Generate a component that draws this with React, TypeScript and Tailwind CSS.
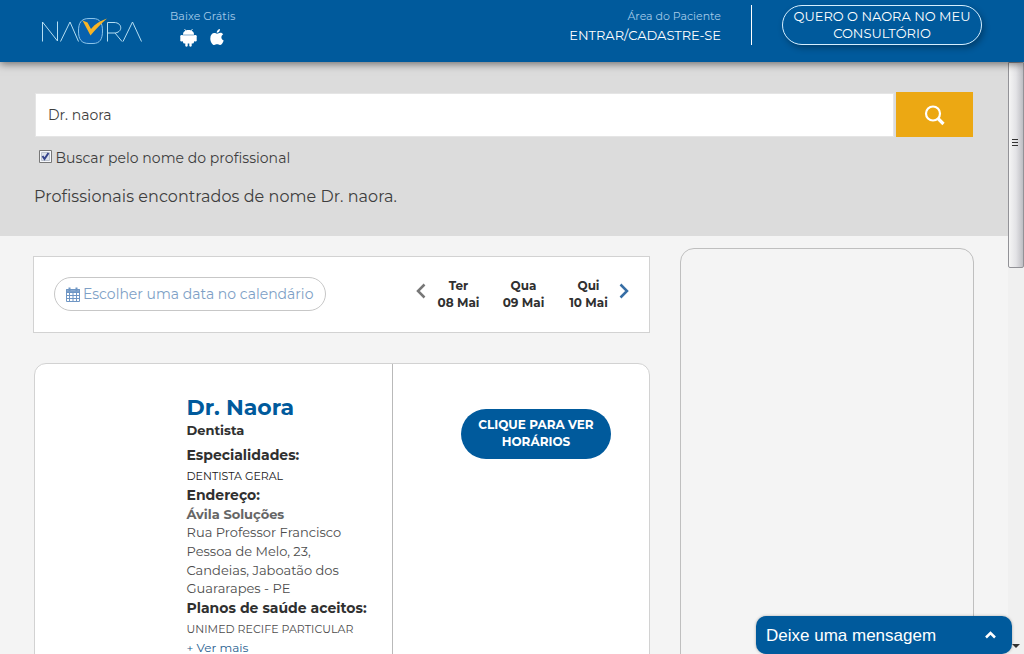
import React from "react";

const days = [
  { name: "Ter", date: "08 Mai" },
  { name: "Qua", date: "09 Mai" },
  { name: "Qui", date: "10 Mai" },
];

function Logo() {
  return (
    <svg width="104" height="30" viewBox="0 0 104 30" fill="none" stroke="#b5def2" strokeWidth="1">
      <path d="M2.500 24.500V5L17.500 24V4.500M20.500 24.500L30 5L38.500 24.500" />
      <path d="M49 1.500H53C60 1.500 62.500 6 62.500 14C62.500 22 60 26.500 53 26.500H49C41 26.500 38.500 22 38.500 14C38.500 6 41 1.500 49 1.500Z" fill="#0861ae" stroke="#8cc4e8" />
      <path d="M67.500 24.500V5.500H74C83 5.500 83 16 74 16H67.500M75 16L82 24.500M83 24.500L92.500 5L101.500 24.500" />
      <path d="M42.500 3.500L47.500 5.500L51 12C55 7 60 4 67 1.500C61 7 55.500 12 50.500 18.500Z" fill="#f8b426" stroke="none" />
    </svg>
  );
}

function AndroidIcon() {
  return (
    <svg width="17" height="20" viewBox="0 0 17 20" fill="#fff">
      <path d="M4.500 1L6 3M12.500 1L11 3" stroke="#fff" strokeWidth=".8" />
      <path d="M3 6.700C3 3.500 5.500 2 8.500 2S14 3.500 14 6.700Z" />
      <path d="M3 7.200H14V14Q14 15.500 12.500 15.500H11.700V18Q10.500 19.500 9.300 18V15.500H7.700V18Q6.500 19.500 5.300 18V15.500H4.500Q3 15.500 3 14Z" />
      <rect x=".3" y="7" width="3" height="6.500" rx="1.300" />
      <rect x="13.700" y="7" width="3" height="6.500" rx="1.300" />
    </svg>
  );
}

function AppleIcon() {
  return (
    <svg width="14" height="18" viewBox="0 0 14 18" fill="#fff">
      <path d="M10 1C10 3.500 8.500 4.800 6.700 4.700C6.700 2.600 8.200 1.200 10 1Z" />
      <path d="M7 5.700C8.200 5.700 9 4.800 10.400 4.800C11.600 4.800 12.600 5.400 13.200 6.300C10.500 8 11 11.500 13.700 12.500C12.800 15 11.500 17 10 17C8.800 17 8.400 16.300 7.100 16.300C5.800 16.300 5.300 17 4.200 17C2.300 17 .3 13.600 .3 10.400C.3 7 2.200 5 4.300 5C5.500 5 6.200 5.700 7 5.700Z" />
    </svg>
  );
}

function CalendarIcon() {
  return (
    <svg width="14" height="15" viewBox="0 0 14 15" fill="none" stroke="#6f96c4">
      <path d="M.5 2.500H13.500V14.500H.5ZM.5 5.500H13.500M.5 8.500H13.500M.5 11.500H13.500M3.500 5V14M7 5V14M10.500 5V14" />
      <path d="M.5 2.500H13.500V5H.5Z" fill="#8aaad0" />
      <path d="M3.500 .5V4M10.500 .5V4" strokeWidth="2" />
    </svg>
  );
}

function Header() {
  return (
    <header className="relative z-10 flex h-[62px] shrink-0 bg-[#005a9c] text-white shadow-[0_2px_8px_rgba(0,0,0,0.5)]">
      <div className="ml-10 mt-[17px] w-[130px]"><Logo /></div>
      <div className="w-[120px] pt-2 text-[11px] leading-4 text-[#a5cae8]">
        <p className="tracking-[0.05px]">Baixe Grátis</p>
        <div className="flex gap-[13px] pl-2.5 pt-1"><AndroidIcon /><AppleIcon /></div>
      </div>
      <div className="ml-auto pt-2 text-right">
        <p className="text-[11px] leading-4 text-[#a5cae8]">Área do Paciente</p>
        <p className="mt-[2px] text-[13px] leading-[18px]">ENTRAR/CADASTRE-SE</p>
      </div>
      <div className="ml-[30px] mt-[5px] h-10 w-px bg-white" />
      <button className="ml-[30px] mr-[42px] mt-[5px] flex h-10 w-[200px] flex-col items-center rounded-[20px] border border-[#d5efff] pt-[2px] text-[13px] leading-[17px] shadow-[2px_3px_6px_rgba(0,0,0,0.3)]">
        <span className="whitespace-nowrap">QUERO O NAORA NO MEU</span>
        <span>CONSULTÓRIO</span>
      </button>
    </header>
  );
}

function Search() {
  return (
    <section className="h-[174px] bg-[#dcdcdc] px-[34px] pt-[30px] text-[#3e3e3e]">
      <div className="flex gap-[2px] pl-px">
        <div className="mt-px flex h-[44px] w-[859px] items-center border border-[#e5e5e5] bg-white pl-3 text-[14px]">Dr. naora</div>
        <button className="flex h-[45px] w-[77px] items-center justify-center bg-[#eca813]">
          <svg width="22" height="22" viewBox="0 0 22 22" fill="none" stroke="#fff">
            <circle cx="9" cy="9.500" r="7" strokeWidth="2.200" />
            <path d="M14 14.500L19.500 20" strokeWidth="3.200" />
          </svg>
        </button>
      </div>
      <label className="mt-[11px] flex h-5 items-center gap-[3.500px] pl-[5px] text-[14px]">
        <svg className="-mt-[3px]" width="13" height="13" viewBox="0 0 13 13">
          <path d="M.5 .5H12.500V12.500H.5Z" fill="#f6f8fc" stroke="#777" />
          <path d="M2.500 2.500H10.500V10.500H2.500Z" fill="#dce2eb" stroke="#bcc3ce" />
          <path d="M3.500 6L5.500 9L9.500 3" fill="none" stroke="#34438b" strokeWidth="2" />
        </svg>
        <span className="tracking-[0.04px]">Buscar pelo nome do profissional</span>
      </label>
      <p className="mt-[17px] text-[16px] leading-6 tracking-[0.05px]">Profissionais encontrados de nome Dr. naora.</p>
    </section>
  );
}

function DatePanel() {
  return (
    <div className="-ml-px flex h-[77px] w-[617px] border border-[#d2d2d2] bg-white">
      <button className="ml-5 mt-5 flex h-[34px] w-[272px] items-center gap-[3px] rounded-[17px] border border-[#c7c7c7] pl-[11px] text-[14px] text-[#7e9fc6]">
        <CalendarIcon /><span className="whitespace-nowrap">Escolher uma data no calendário</span>
      </button>
      <div className="ml-auto mr-[18px] mt-5 flex text-[12px] font-bold leading-[17px] text-[#303030]">
        <svg className="mt-[6px]" width="14" height="16" viewBox="0 0 14 16" fill="none" stroke="#777" strokeWidth="2.500"><path d="M10.500 1.500L4 8L10.500 14.500" /></svg>
        <div className="-ml-[2px] -mr-[4px] flex text-center">
          {days.map((day) => (
            <div key={day.name} className="w-[65px]"><p>{day.name}</p><p>{day.date}</p></div>
          ))}
        </div>
        <svg className="mt-[6px]" width="14" height="16" viewBox="0 0 14 16" fill="none" stroke="#376ea5" strokeWidth="2.500"><path d="M3.500 1.500L10 8L3.500 14.500" /></svg>
      </div>
    </div>
  );
}

function ProfileCard() {
  return (
    <article className="mt-[30px] flex h-[320px] w-[616px] rounded-t-[12px] border border-[#d2d2d2] bg-white text-[#303030]">
      <div className="w-[358px] shrink-0 whitespace-nowrap border-r border-[#b9b9b9] pl-[151.500px] pt-[31px]">
        <h1 className="text-[22px] font-bold leading-[26px] text-[#005a9c]">Dr. Naora</h1>
        <p className="text-[13px] font-bold leading-[19px]">Dentista</p>
        <h2 className="mt-[5px] text-[14px] font-bold leading-5">Especialidades:</h2>
        <p className="mt-px text-[11px] leading-5 text-[#171717]">DENTISTA GERAL</p>
        <h2 className="text-[14px] font-bold leading-[19px]">Endereço:</h2>
        <p className="text-[13px] font-bold leading-[18px] text-[#666]">Ávila Soluções</p>
        <address className="text-[13px] not-italic leading-[18.800px] text-[#4d4d4d]">
          Rua Professor Francisco<br />Pessoa de Melo, 23,<br />Candeias, Jaboatão dos<br />Guararapes - PE
        </address>
        <h2 className="text-[14px] font-bold leading-5">Planos de saúde aceitos:</h2>
        <p className="text-[11px] leading-[22px] tracking-[0.04px] text-[#4d4d4d]">UNIMED RECIFE PARTICULAR</p>
        <a className="block text-[12px] leading-4 text-[#286090]">+ Ver mais</a>
      </div>
      <div className="flex-1 pl-[68px] pt-[45px]">
        <button className="flex h-[50px] w-[150px] flex-col items-center rounded-[25px] bg-[#005a9c] pt-[7px] text-[12px] font-bold leading-[17px] text-white">
          <span className="whitespace-nowrap">CLIQUE PARA VER</span><span>HORÁRIOS</span>
        </button>
      </div>
    </article>
  );
}

function Scrollbar() {
  return (
    <aside className="flex w-4 flex-col bg-[#f0f0f0]">
      <div className="flex h-[206px] items-start justify-center rounded-b-[2px] border border-[#929297] bg-linear-to-r from-[#f5f5f5] via-[#e3e3e6] to-[#bebec3] pt-[75px]">
        <svg className="mr-0.5" width="8" height="9" viewBox="0 0 8 9" stroke="#333"><path d="M1 1.500H7M1 4.500H7M1 7.500H7" /></svg>
      </div>
      <svg className="mb-[5px] ml-1 mt-auto" width="8" height="6" viewBox="0 0 8 6"><path d="M0 1H8L4 5Z" fill="#333" /></svg>
    </aside>
  );
}

export default function App() {
  return (
    <div className="relative flex h-[654px] w-[1024px] flex-col overflow-hidden bg-[#f4f4f4] font-['Montserrat','Inter',sans-serif]">
      <Header />
      <div className="flex min-h-0 flex-1">
        <main className="w-[1008px] overflow-hidden">
          <Search />
          <div className="flex items-start pl-[34px]">
            <div className="mt-5 w-[646px]"><DatePanel /><ProfileCard /></div>
            <div className="mt-3 h-[420px] w-[294px] rounded-t-[14px] border border-[#bfbfbf]" />
          </div>
        </main>
        <Scrollbar />
      </div>
      <button className="absolute bottom-0 left-[756px] z-20 flex h-[38px] w-64 items-center justify-between rounded-[10px] bg-[#005a9c] pl-[10px] pr-[15px] font-['Liberation_Sans',Arial,sans-serif] text-[17px] text-white shadow-[0_0_3px_rgba(0,0,0,0.3)]">
        <span className="pt-0.5">Deixe uma mensagem</span>
        <svg width="13" height="10" viewBox="0 0 13 10" fill="none" stroke="#fff" strokeWidth="2.500"><path d="M2 7.500L6.500 3L11 7.500" /></svg>
      </button>
    </div>
  );
}
